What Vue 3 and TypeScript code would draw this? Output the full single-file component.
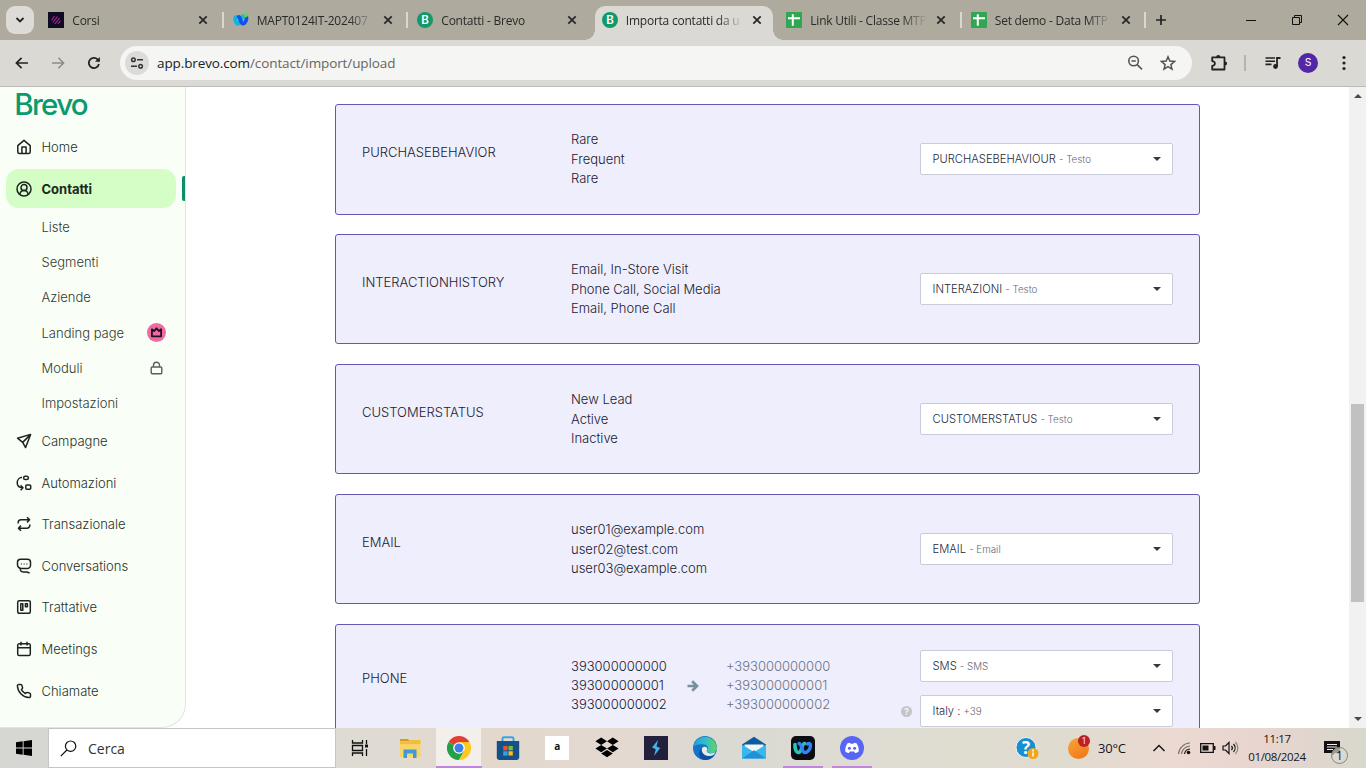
<script setup lang="ts">
type Tab = { title: string; icon: 'corsi' | 'webex' | 'brevo' | 'sheet'; active?: boolean; sep?: boolean }
type NavItem = { label: string; icon: string }
type SubItem = { label: string; badge?: 'crown' | 'lock' }
type FieldCard = { name: string; values: string[]; target: string; kind: string }

const tabs: Tab[] = [
  { title: 'Corsi', icon: 'corsi', sep: true },
  { title: 'MAPT0124IT-202407', icon: 'webex', sep: true },
  { title: 'Contatti - Brevo', icon: 'brevo' },
  { title: 'Importa contatti da u', icon: 'brevo', active: true },
  { title: 'Link Utili - Classe MTP', icon: 'sheet', sep: true },
  { title: 'Set demo - Data MTP', icon: 'sheet', sep: true },
]

const subItems: SubItem[] = [
  { label: 'Liste' },
  { label: 'Segmenti' },
  { label: 'Aziende' },
  { label: 'Landing page', badge: 'crown' },
  { label: 'Moduli', badge: 'lock' },
  { label: 'Impostazioni' },
]

const navItems: NavItem[] = [
  { label: 'Campagne', icon: 'M1.5 5.2 14.6 1.4 9.6 14.6 6.7 9.4ZM6.7 9.4 14.4 1.6' },
  { label: 'Automazioni', icon: 'M6 2.300A5.400 5.400 0 0 0 1.200 7.600c0 3 2 5.200 5.400 5.200M4.600 10.400 7 12.800 4.600 15.200M9.300 1.200h1.400a1.700 1.700 0 0 1 0 3.400H9.300a1.700 1.700 0 0 1 0-3.400ZM10.800 10h2.900a1 1 0 0 1 1 1v2.300a1 1 0 0 1-1 1h-2.900a1 1 0 0 1-1-1V11a1 1 0 0 1 1-1Z' },
  { label: 'Transazionale', icon: 'M11 1.2 13.6 3.8 11 6.4M13.6 3.8H5A2.8 2.8 0 0 0 2.2 6.6V7.4M5 14.8 2.4 12.2 5 9.6M2.4 12.2H11A2.8 2.8 0 0 0 13.8 9.4V8.6' },
  { label: 'Conversations', icon: 'M14.500 4.200V7.600a2.800 2.800 0 0 1-2.800 2.800H5.200A3.600 3.600 0 0 1 1.500 6.800V4.200A2.900 2.900 0 0 1 4.400 1.300h7.200a2.900 2.900 0 0 1 2.900 2.900ZM4.200 10.400c-.2 2.400 1 3.600 3 3.600h3.500l2.900 1M4.900 5.900h.8M7.700 5.900h.8M10.500 5.900h.8' },
  { label: 'Trattative', icon: 'M3.200 1.700h9.600a1.500 1.500 0 0 1 1.500 1.500v9.600a1.500 1.500 0 0 1-1.500 1.500H3.200a1.500 1.500 0 0 1-1.500-1.500V3.200a1.500 1.500 0 0 1 1.500-1.500ZM4.800 4.700h2v6.500h-2ZM9.400 4.700h2V7.700h-2Z' },
  { label: 'Meetings', icon: 'M3.300 2.800h9.400a1.600 1.600 0 0 1 1.600 1.600v8.500a1.600 1.600 0 0 1-1.600 1.600H3.300a1.600 1.600 0 0 1-1.600-1.600V4.400a1.600 1.600 0 0 1 1.600-1.600ZM1.700 6.700h12.600M5 .8v3.600M11 .8v3.600' },
  { label: 'Chiamate', icon: 'M14.500 11.300v1.900a1.400 1.400 0 0 1-1.500 1.400C6.700 14.100 1.900 9.200 1.400 3A1.400 1.400 0 0 1 2.800 1.400h1.900c.7 0 1.200.4 1.300 1.100.1.700.3 1.300.5 1.900.2.500.1 1-.3 1.400l-.8.8a10.500 10.500 0 0 0 4 4l.8-.8c.4-.4.9-.5 1.400-.3.600.2 1.200.4 1.800.5.700.1 1.100.600 1.100 1.300Z' },
]

const cards: FieldCard[] = [
  { name: 'PURCHASEBEHAVIOR', values: ['Rare', 'Frequent', 'Rare'], target: 'PURCHASEBEHAVIOUR', kind: 'Testo' },
  { name: 'INTERACTIONHISTORY', values: ['Email, In-Store Visit', 'Phone Call, Social Media', 'Email, Phone Call'], target: 'INTERAZIONI', kind: 'Testo' },
  { name: 'CUSTOMERSTATUS', values: ['New Lead', 'Active', 'Inactive'], target: 'CUSTOMERSTATUS', kind: 'Testo' },
  { name: 'EMAIL', values: ['user01@example.com', 'user02@test.com', 'user03@example.com'], target: 'EMAIL', kind: 'Email' },
]

const phones = ['393000000000', '393000000001', '393000000002']
</script>

<template>
  <div class="screen">
    <header class="tabstrip">
      <button class="tab-search" aria-label="Cerca schede">
        <svg width="10" height="8" viewBox="0 0 10 8"><path d="M1.500 2 5 5.500 8.500 2" fill="none" stroke="#222" stroke-width="1.800" /></svg>
      </button>
      <div class="tabs">
        <div v-for="tab in tabs" :key="tab.title" class="tab" :class="{ active: tab.active, sep: tab.sep }">
          <svg class="fav" width="16" height="16" viewBox="0 0 16 16">
            <template v-if="tab.icon === 'corsi'">
              <rect width="16" height="16" fill="#0e0b22" />
              <path d="M3.500 8.500 6.500 4M5 10.500 9.500 4.500M7 11.800 11.500 6M10 12 12.500 8.500" stroke="#a8269a" stroke-width="1.200" />
            </template>
            <template v-else-if="tab.icon === 'webex'">
              <path d="M2.600 5.200c-.8 3 .6 6.500 2.500 6.500 2.300 0 2.600-7 5.400-7.400" fill="none" stroke="#12b4dc" stroke-width="4" stroke-linecap="round" />
              <path d="M5.600 4.800c2.200.2 1.600 6.800 4.400 6.800 2.300 0 3.600-3.600 3.500-6" fill="none" stroke="#1450ef" stroke-width="3.800" stroke-linecap="round" />
              <circle cx="12.500" cy="3.500" r="2" fill="#55d65c" />
            </template>
            <template v-else-if="tab.icon === 'brevo'">
              <circle cx="8" cy="8" r="8" fill="#11996a" />
              <text x="8" y="12.200" text-anchor="middle" font-size="11.500" font-weight="600" fill="#fff" class="fav-letter">B</text>
            </template>
            <template v-else>
              <rect width="16" height="16" rx="1" fill="#2fa652" />
              <path d="M2 6.200h12M6.800 2.200v11.600" stroke="#fff" stroke-width="2" />
            </template>
          </svg>
          <span class="tab-title">{{ tab.title }}</span>
          <svg class="tab-close" width="10" height="10" viewBox="0 0 10 10"><path d="m1.300 1.300 7.400 7.400m0-7.400-7.400 7.400" stroke="#262626" stroke-width="1.700" /></svg>
        </div>
      </div>
      <svg class="new-tab" width="12" height="12" viewBox="0 0 12 12"><path d="M6 1v10M1 6h10" stroke="#222" stroke-width="1.700" /></svg>
      <div class="window-buttons">
        <svg width="12" height="12" viewBox="0 0 12 12"><path d="M1 6.500h10" stroke="#111" /></svg>
        <svg width="12" height="12" viewBox="0 0 12 12"><path d="M1.500 3.500h7v7h-7zM3.500 3.500v-2h7v7h-2" fill="none" stroke="#111" /></svg>
        <svg width="12" height="12" viewBox="0 0 12 12"><path d="m1 1 10 10M11 1 1 11" stroke="#111" stroke-width="1.100" /></svg>
      </div>
    </header>

    <div class="toolbar">
      <svg class="tb-icon" width="16" height="16" viewBox="0 0 16 16"><path d="M14 8H2.800M7.600 2.800 2.400 8l5.200 5.200" fill="none" stroke="#222" stroke-width="1.700" /></svg>
      <svg class="tb-icon" width="16" height="16" viewBox="0 0 16 16"><path d="M2 8h11.200M8.400 2.800 13.600 8l-5.200 5.200" fill="none" stroke="#8d8c88" stroke-width="1.500" /></svg>
      <svg class="tb-icon" width="16" height="16" viewBox="0 0 16 16"><path d="M12.900 9A5.100 5.100 0 1 1 11.600 4.400L13.200 6" fill="none" stroke="#222" stroke-width="1.800" /><path d="M13.900 1.900v4.900H9z" fill="#222" /></svg>
      <div class="omnibox">
        <span class="site-info">
          <svg width="14" height="12" viewBox="0 0 14 12" fill="none" stroke="#333" stroke-width="1.500"><circle cx="3.400" cy="2.800" r="1.800" /><path d="M7 2.800h6M1 9.200h6" /><circle cx="10.600" cy="9.200" r="1.800" /></svg>
        </span>
        <span class="url"><span class="host">app.brevo.com</span>/contact/import/upload</span>
        <svg class="zoom-ic" width="16" height="16" viewBox="0 0 16 16" fill="none" stroke="#55554f" stroke-width="1.600"><circle cx="6.600" cy="6" r="4.800" /><path d="m10.200 9.600 4.800 4.800M4.400 6h4.400" /></svg>
        <svg class="star-ic" width="16" height="16" viewBox="0 0 16 16" fill="none" stroke="#55554f" stroke-width="1.500"><path d="m8 1.800 1.800 4.300 4.700.4L10.900 9.600l1.100 4.500L8 11.700l-4 2.400 1.100-4.500L1.500 6.500l4.700-.4Z" /></svg>
      </div>
      <svg class="puzzle" width="18" height="18" viewBox="0 0 18 18"><path d="M2.200 3.300h12.300v12.200H2.200v-3.700c1.700 0 2.700-1 2.700-2.300S3.900 7.100 2.200 7.100Z" fill="none" stroke="#222" stroke-width="1.800" stroke-linejoin="round" /><path d="M6.200 3a2.100 2.100 0 0 1 4.200 0ZM15 7.400a2.100 2.100 0 0 1 0 4.200Z" fill="#222" /></svg>
      <span class="tb-divider"></span>
      <svg class="media" width="16" height="14" viewBox="0 0 16 14"><path d="M.5 2h9.500M.5 5.200h9.500M.5 8.400h6" stroke="#222" stroke-width="1.600" /><path d="M12 10.500V2h3.500" fill="none" stroke="#222" stroke-width="1.800" /><circle cx="10.500" cy="10.500" r="2.400" fill="#222" /></svg>
      <span class="avatar">S</span>
      <svg class="kebab" width="4" height="16" viewBox="0 0 4 16" fill="#222"><circle cx="2" cy="2.500" r="1.600" /><circle cx="2" cy="8" r="1.600" /><circle cx="2" cy="13.500" r="1.600" /></svg>
    </div>

    <div class="page">
      <aside class="sidebar">
        <svg class="logo" width="84" height="24" viewBox="0 0 84 24">
          <text x="-.8" y="22" textLength="74.500" lengthAdjust="spacing">Brevo</text>
        </svg>
        <nav>
          <a class="nav-item">
            <svg width="16" height="16" viewBox="0 0 16 16"><path d="M1.800 6.600 8 1.400l6.200 5.200v6.500a1.400 1.400 0 0 1-1.400 1.400H3.200a1.400 1.400 0 0 1-1.400-1.400ZM5.900 14.500V8h4.200v6.500" /></svg>
            <span>Home</span>
          </a>
          <a class="nav-item current">
            <svg width="16" height="16" viewBox="0 0 16 16"><circle cx="8" cy="8" r="7" /><circle cx="8" cy="6.600" r="3" /><path d="M3.800 13.300c.5-2.400 2-3.700 4.200-3.700s3.700 1.300 4.200 3.700" /></svg>
            <span>Contatti</span>
          </a>
          <div class="subnav">
            <a v-for="item in subItems" :key="item.label" class="sub-item">
              <span>{{ item.label }}</span>
              <svg v-if="item.badge === 'crown'" width="19" height="19" viewBox="0 0 19 19"><circle cx="9.500" cy="9.500" r="9.500" fill="#ee6aa0" /><path d="M4.900 6.300 7.200 8l2.300-2.700L11.800 8l2.300-1.700v7H4.900Z" fill="none" stroke="#1c1420" stroke-width="1.800" stroke-linejoin="round" /></svg>
              <svg v-else-if="item.badge === 'lock'" width="19" height="14" viewBox="0 0 19 14"><path d="M5.200 6h8.600a1 1 0 0 1 1 1v4.600a1.200 1.200 0 0 1-1.200 1.200H5.400a1.200 1.200 0 0 1-1.200-1.200V7a1 1 0 0 1 1-1ZM6.500 6V4.200a3 3 0 0 1 6 0V6" fill="none" stroke="#55605a" stroke-width="1.400" /></svg>
            </a>
          </div>
          <a v-for="item in navItems" :key="item.label" class="nav-item">
            <svg width="16" height="16" viewBox="0 0 16 16"><path :d="item.icon" /></svg>
            <span>{{ item.label }}</span>
          </a>
        </nav>
      </aside>

      <main class="content">
        <section v-for="card in cards" :key="card.name" class="card">
          <h3>{{ card.name }}</h3>
          <ul>
            <li v-for="(value, i) in card.values" :key="i">{{ value }}</li>
          </ul>
          <div class="select">
            <span>{{ card.target }} <small>- {{ card.kind }}</small></span>
            <i class="caret"></i>
          </div>
        </section>
        <section class="card phone">
          <h3>PHONE</h3>
          <div class="phone-values">
            <ul>
              <li v-for="p in phones" :key="p">{{ p }}</li>
            </ul>
            <svg width="12" height="12" viewBox="0 0 12 12"><path d="M.5 6h8.500M5.200 1.200 10 6l-4.800 4.800" fill="none" stroke="#78909c" stroke-width="2.700" /></svg>
            <ul class="muted">
              <li v-for="p in phones" :key="p">+{{ p }}</li>
            </ul>
          </div>
          <div class="phone-selects">
            <div class="select"><span>SMS <small>- SMS</small></span><i class="caret"></i></div>
            <div class="country">
              <span class="help">?</span>
              <div class="select"><span>Italy : <small>+39</small></span><i class="caret"></i></div>
            </div>
          </div>
        </section>
      </main>

      <div class="scrollbar">
        <i class="up"></i>
        <div class="track"><div class="thumb"></div></div>
        <i class="down"></i>
      </div>
    </div>

    <footer class="taskbar">
      <div class="start">
        <svg width="16" height="16" viewBox="0 0 16 16"><path d="M0 2.300 6.700 1.300v6.200H0ZM7.600 1.200 16 0v7.500H7.600ZM0 8.500h6.700v6.200L0 13.700ZM7.600 8.500H16V16l-8.400-1.200Z" fill="#000" /></svg>
      </div>
      <div class="search">
        <svg width="17" height="17" viewBox="0 0 17 17" fill="none" stroke="#111" stroke-width="1.200"><circle cx="10.600" cy="6.200" r="5.200" /><path d="M6.900 10 .8 16.200" /></svg>
        <span>Cerca</span>
      </div>
      <div class="apps">
        <div class="app">
          <svg width="24" height="24" viewBox="0 0 24 24" fill="none" stroke="#111" stroke-width="1.300"><path d="M3.500 4v3h10V4M3.500 20v-3h10v3M3.500 9.500h10v5h-10ZM17.500 4v4M17.500 13v7" /><path d="M17.500 8.500v3" stroke-width="3" /></svg>
        </div>
        <div class="app">
          <svg width="24" height="24" viewBox="0 0 24 24"><path d="M2 3h8l2 2.500H2Z" fill="#d69a1d" /><path d="M2 5.500h20.500V21H2Z" fill="#fbd467" /><path d="M2 5.500h8l2-1.500h10.500v4H2Z" fill="#f2bd3f" /><path d="M5.500 22v-8.500h13V22H15v-4.500H9V22Z" fill="#3e9ad8" /></svg>
        </div>
        <div class="app open focused">
          <svg width="24" height="24" viewBox="0 0 24 24"><path d="M12 12 1.600 6A12 12 0 0 1 22.400 6Z" fill="#e43e31" /><path d="M1.600 6A12 12 0 0 0 12 24l5.200-9-5.200-3Z" fill="#24a04a" /><path d="M22.400 6A12 12 0 0 1 12 24l5.200-9L12 6Z" fill="#fcc922" /><circle cx="12" cy="12" r="5.800" fill="#fff" /><circle cx="12" cy="12" r="4.500" fill="#3e7fe8" /></svg>
        </div>
        <div class="app">
          <svg width="24" height="24" viewBox="0 0 24 24"><path d="M6.500 6V2.800A1.500 1.500 0 0 1 8 1.300h8a1.500 1.500 0 0 1 1.500 1.500V6" fill="none" stroke="#3aa5e5" stroke-width="2" /><path d="M.8 5h22.400v16.600a2.400 2.400 0 0 1-2.400 2.400H3.200a2.400 2.400 0 0 1-2.400-2.400Z" fill="#165089" /><path d="M7.200 10h4.300v4.300H7.200Z" fill="#f05326" /><path d="M12.500 10h4.300v4.300h-4.300Z" fill="#82bc31" /><path d="M7.200 15.300h4.300v4.300H7.200Z" fill="#28a8e8" /><path d="M12.500 15.300h4.300v4.300h-4.300Z" fill="#fcba22" /></svg>
        </div>
        <div class="app"><span class="amazon">a</span></div>
        <div class="app">
          <svg width="24" height="24" viewBox="0 0 24 24" fill="#000"><path d="m6.200 1.500 5.800 3.700-5.800 3.700L.4 5.200ZM17.800 1.500l5.800 3.700-5.800 3.700L12 5.200ZM6.200 8.900 12 12.600l-5.800 3.700-5.800-3.700ZM17.800 8.900l5.800 3.700-5.800 3.700-5.800-3.700ZM12 13.900l5.800 3.700-5.800 3.700-5.800-3.700Z" /></svg>
        </div>
        <div class="app">
          <svg width="24" height="24" viewBox="0 0 24 24"><rect width="24" height="24" fill="#22203c" /><path d="M14 4 8 11.500l3.800 1.700L10 20l6.200-8-3.700-1.500Z" fill="#43b4ef" /></svg>
        </div>
        <div class="app">
          <svg width="24" height="24" viewBox="0 0 24 24">
            <defs>
              <linearGradient id="edgeTop" x1="0" x2="1"><stop offset="0" stop-color="#279cdf" /><stop offset=".55" stop-color="#34c2c0" /><stop offset="1" stop-color="#67d35c" /></linearGradient>
            </defs>
            <circle cx="12" cy="12" r="12" fill="#1474c9" />
            <path d="M.2 11A12 12 0 0 1 24 11.500c0 3.700-3 5.500-6 5.500-2.600 0-4.500-1.100-3.700-2.500 2.200-3-.6-6.600-5.200-6.200C4.500 8.300 1 9.500.2 11Z" fill="url(#edgeTop)" />
            <path d="M8.400 12.500c-.8 5 4.200 9 12.600 7.500A12 12 0 0 1 12 24C6.500 23.500 3.800 17 8.400 12.500Z" fill="#10509e" />
            <path d="M9 12.500c1-2.500 5-2.500 5.400.5 0 1-1 1.400-.6 2.600 1.200 2.500 6 2.300 8.800.2-1 3-3.500 4.200-6.800 4.200C11 20 8.200 16 9 12.500Z" fill="#e8ebe8" />
          </svg>
        </div>
        <div class="app">
          <svg width="24" height="24" viewBox="0 0 24 24"><path d="M0 8.500 12 .8l12 7.700V12H0Z" fill="#0c5a9f" /><path d="M2.500 8.500h19v7h-19Z" fill="#f2f5f7" /><path d="M0 8.500 12 16 24 8.500v14H0Z" fill="#38b8ed" /><path d="m0 22.500 12-8.200 12 8.200Z" fill="#2090d8" /></svg>
        </div>
        <div class="app open">
          <svg width="24" height="24" viewBox="0 0 24 24" fill="none" stroke-linecap="round"><rect width="24" height="24" rx="5" fill="#0b0d12" /><path d="M4 8.500c-.5 4.500 1.500 8 3.700 8 3.200 0 2.900-9 6-9" stroke="#23c6b7" stroke-width="3.600" /><path d="M8 7.500c3 0 2.600 9 5.700 9 3 0 5.800-3.500 5.800-7 0-2-1.500-2.500-3-1.500" stroke="#3482f5" stroke-width="3.400" /></svg>
        </div>
        <div class="app open">
          <svg width="24" height="24" viewBox="0 0 24 24"><circle cx="12" cy="12" r="12" fill="#5865f2" /><path d="M7.500 7.300 10 6.700l.6 1h2.800l.6-1 2.500.6c1.700 2.500 2.500 5 2.200 8.200-1.300 1-2.300 1.400-3.600 1.600l-.9-1.500H9.800l-.9 1.500c-1.300-.2-2.300-.600-3.600-1.600-.3-3.200.5-5.700 2.200-8.200Z" fill="#fff" /><circle cx="9.400" cy="12.300" r="1.500" fill="#5865f2" /><circle cx="14.600" cy="12.300" r="1.500" fill="#5865f2" /></svg>
        </div>
      </div>
      <div class="tray">
        <svg class="t-help" width="24" height="24" viewBox="0 0 24 24"><circle cx="11" cy="11.500" r="10" fill="#188fce" stroke="#f2f2f2" /><text x="11" y="17.500" text-anchor="middle" font-size="17" font-weight="700" fill="#fff">?</text><circle cx="18" cy="17.500" r="5.500" fill="#f4a51c" /><path d="M18 16.500v4" stroke="#fff" stroke-width="1.500" /><circle cx="18" cy="14.400" r="1" fill="#fff" /></svg>
        <span class="weather"><span class="alert">1</span></span>
        <span class="temp">30°C</span>
        <svg class="t-chev" width="14" height="8" viewBox="0 0 14 8"><path d="m1.500 7 5.500-5.500L12.500 7" fill="none" stroke="#111" stroke-width="1.400" /></svg>
        <svg class="t-wifi" width="15" height="14" viewBox="0 0 15 14" fill="none" stroke="#77716d" stroke-width="1.200"><path d="M1.500 13A12 12 0 0 1 13 2M4.500 13A9 9 0 0 1 13 5" /><path d="M7.500 13A6 6 0 0 1 13 8" stroke="#222" /><circle cx="11.500" cy="11.500" r="1.800" fill="#111" stroke="none" /></svg>
        <svg class="t-batt" width="16" height="10" viewBox="0 0 16 10"><path d="M.7.7h12.600v8.600H.7Z" fill="none" stroke="#111" stroke-width="1.300" /><path d="M2.500 2.500h6v5h-6ZM14 3h1.500v4H14Z" fill="#111" /></svg>
        <svg class="t-vol" width="17" height="14" viewBox="0 0 17 14" fill="none" stroke="#111" stroke-width="1.200"><path d="M1 5h2.500L7 1.500v11L3.500 9H1ZM9.500 4.800a3.500 3.500 0 0 1 0 4.400M11.500 3a6 6 0 0 1 0 8" /><path d="M13.500 1a9 9 0 0 1 0 12" stroke="#8d8785" /></svg>
        <div class="clock"><span>11:17</span><span>01/08/2024</span></div>
        <div class="notify">
          <svg width="16" height="15" viewBox="0 0 16 15"><path d="M0 0h16v12h-5l-3 3v-3H0Z" fill="#111" /><path d="M3 3.500h10M3 6h10M3 8.500h6" stroke="#eee" stroke-width="1.100" /></svg>
          <span>1</span>
        </div>
      </div>
    </footer>
  </div>
</template>

<style>
body {
  overflow: hidden;
}
</style>

<style scoped>
.screen {
  width: 1366px;
  height: 768px;
  display: flex;
  flex-direction: column;
  overflow: hidden;
  background: #fff;
  font-family: Inter, "Liberation Sans", sans-serif;
}
.screen * {
  box-sizing: border-box;
}
svg {
  flex: none;
  display: block;
}

/* Tab strip */
.tabstrip {
  height: 40px;
  flex: none;
  display: flex;
  align-items: center;
  background: #aeaa9e;
  font-family: "Open Sans", "Noto Sans", sans-serif;
}
.tab-search {
  width: 28px;
  height: 28px;
  margin-left: 6px;
  border: 0;
  padding: 0;
  border-radius: 9px;
  background: #dcdbd6;
  display: grid;
  place-items: center;
}
.tabs {
  display: flex;
  margin-left: 4px;
  align-self: stretch;
  width: 1107px;
}
.tab {
  flex: 1 1 0;
  min-width: 0;
  position: relative;
  display: flex;
  align-items: center;
  padding: 0 14.200px 0 10.300px;
}
.tab.sep::after {
  content: "";
  position: absolute;
  right: -1px;
  top: 12px;
  width: 2px;
  height: 16px;
  background: #d9d7d0;
}
.tab > * {
  position: relative;
}
.tab.active::before {
  content: "";
  position: absolute;
  left: 3px;
  right: 3px;
  top: 6px;
  bottom: 0;
  border-radius: 10px 10px 0 0;
  background: #dad9d4;
}
.tab.active::after {
  content: "";
  position: absolute;
  left: -7px;
  right: -7px;
  bottom: 0;
  height: 10px;
  background:
    radial-gradient(circle at 0 0, transparent 9.500px, #dad9d4 10px) left / 10px 10px no-repeat,
    radial-gradient(circle at 100% 0, transparent 9.500px, #dad9d4 10px) right / 10px 10px no-repeat;
}
.fav-letter {
  font-family: Inter, sans-serif;
}
.tab-title {
  flex: 1;
  margin-left: 8px;
  margin-right: 8px;
  padding-top: 1px;
  white-space: nowrap;
  font-size: 12px;
  line-height: 18px;
  letter-spacing: -0.230px;
  color: #2a2a28;
  mask-image: linear-gradient(90deg, #000 92px, transparent 117px);
}
.new-tab {
  margin-left: 10px;
}
.window-buttons {
  margin-left: auto;
  display: flex;
  gap: 34px;
  padding-right: 17px;
}

/* Toolbar */
.toolbar {
  height: 47px;
  flex: none;
  display: flex;
  align-items: center;
  border-bottom: 1px solid #bdbcb8;
  background: #dad9d4;
}
.tb-icon {
  margin-left: 14px;
  margin-right: 6px;
}
.omnibox {
  width: 1072px;
  height: 34px;
  margin-left: 12px;
  padding: 0 16px 0 5px;
  border-radius: 17px;
  background: #f5f5f3;
  display: flex;
  align-items: center;
}
.site-info {
  width: 24px;
  height: 24px;
  border-radius: 50%;
  background: #dcdbd8;
  display: grid;
  place-items: center;
}
.url {
  margin-left: 8px;
  font-family: "Open Sans", "Noto Sans", sans-serif;
  font-size: 13.500px;
  letter-spacing: -0.110px;
  color: #666661;
}
.host {
  color: #20201f;
}
.zoom-ic {
  margin-left: auto;
}
.star-ic {
  margin-left: 17px;
}
.puzzle {
  margin-left: 18px;
}
.tb-divider {
  width: 2px;
  height: 16px;
  margin-left: 16px;
  background: #b5b3ae;
}
.media {
  margin-left: 19px;
}
.avatar {
  width: 20px;
  height: 20px;
  margin-left: 17px;
  border-radius: 50%;
  background: #5227a5;
  color: #fff;
  font-size: 10.500px;
  line-height: 20px;
  text-align: center;
}
.kebab {
  margin-left: 24px;
}

/* Page */
.page {
  height: 641px;
  flex: none;
  display: flex;
  overflow: hidden;
}
.sidebar {
  width: 186px;
  height: 641px;
  padding: 6px 9px 0 6px;
  background: #f9fff6;
  border-right: 1px solid #dfe6e2;
  border-bottom: 1px solid #dfe6e2;
  border-bottom-right-radius: 24px;
}
.logo {
  margin-left: 9px;
  margin-bottom: 10.850px;
}
.logo text {
  font-family: Inter, sans-serif;
  font-size: 29.500px;
  font-weight: 500;
  fill: #0b996e;
}
.nav-item {
  height: 39px;
  margin-bottom: 2.600px;
  padding-left: 10px;
  display: flex;
  align-items: center;
  gap: 9.500px;
  color: #26302b;
  font-size: 13px;
  font-weight: 300;
}
.nav-item svg {
  fill: none;
  stroke: #1b2420;
  stroke-width: 1.500;
  stroke-linejoin: round;
}
.nav-item.current {
  position: relative;
  margin-bottom: 0;
  border-radius: 13px;
  background: #d5fdc6;
  color: #1b2a20;
  font-weight: 700;
}
.nav-item.current::after {
  content: "";
  position: absolute;
  right: -9px;
  top: 7px;
  width: 3px;
  height: 25px;
  border-radius: 2px 0 0 2px;
  background: #0b8f68;
}
.subnav {
  padding: 1px 0 1px;
}
.sub-item {
  height: 35.200px;
  padding: 0 10px 0 35.500px;
  display: flex;
  align-items: center;
  justify-content: space-between;
  color: #303a34;
  font-size: 13px;
  font-weight: 300;
}
.content {
  width: 865px;
  margin-left: 149px;
  padding-top: 17px;
}
.card {
  height: 110px;
  margin-bottom: 20px;
  padding: 25px 26px 0;
  border: 1px solid #6556b3;
  border-radius: 3px;
  background: #eeeefc;
  display: grid;
  grid-template-columns: 209px 349px 253px;
  align-items: start;
  color: #1c2030;
  font-weight: 300;
}
.card:first-child {
  height: 111px;
  margin-bottom: 19px;
}
h3 {
  margin: 13px 0 0;
  font-size: 13px;
  line-height: 19.500px;
  font-weight: 300;
}
ul {
  margin: 0;
  padding: 0;
  list-style: none;
  font-size: 13px;
  line-height: 19.500px;
}
.select {
  height: 32px;
  margin-top: 13px;
  padding: 0 11px 0 11.500px;
  border: 1px solid #c9cbdc;
  border-radius: 2px;
  background: #fff;
  display: flex;
  align-items: center;
  justify-content: space-between;
  font-size: 11.200px;
  color: #262a3a;
}
.select small {
  font-size: 9.800px;
  color: #5f6a7a;
}
.caret {
  border: 4px solid transparent;
  border-top: 4px solid #333843;
  border-bottom: 0;
}
.phone {
  height: 140px;
}
.phone h3 {
  margin-top: 19px;
}
.phone-values {
  display: grid;
  grid-template-columns: 116px 39px auto;
  align-items: center;
  padding-top: 7px;
}
.phone-values ul {
  line-height: 19.200px;
}
.muted {
  color: #6a7488;
}
.phone-selects {
  display: grid;
  gap: 13px;
}
.phone-selects .select {
  margin-top: 0;
}
.country {
  position: relative;
}
.help {
  position: absolute;
  left: -19px;
  top: 11px;
  width: 11px;
  height: 11px;
  border-radius: 50%;
  background: #c3c3c8;
  color: #f4f4fb;
  font-size: 9px;
  font-weight: 700;
  line-height: 11px;
  text-align: center;
}
.scrollbar {
  width: 17px;
  margin-left: auto;
  background: #f1f1f1;
  display: flex;
  flex-direction: column;
  align-items: center;
}
.up {
  margin-top: 7px;
  border: 4px solid transparent;
  border-top: 0;
  border-bottom: 4px solid #4a4a4a;
}
.down {
  margin-bottom: 7px;
  border: 4px solid transparent;
  border-bottom: 0;
  border-top: 4px solid #4a4a4a;
}
.track {
  flex: 1;
  padding-top: 306px;
}
.thumb {
  width: 13px;
  height: 198px;
  background: #c1c1c1;
}

/* Taskbar */
.taskbar {
  height: 40px;
  flex: none;
  display: flex;
  background: linear-gradient(90deg, #dedbd3 0, #dfdbd3 28%, #e4d8cd 36%, #e3d9d1 46%, #dad9d2 53%, #dfddd2 65%, #dfdbcf 78%, #ecd9d2 86%, #e8d5cf 92%, #d8d8cd 100%);
  font-family: "Open Sans", "Noto Sans", sans-serif;
  color: #16161a;
}
.start {
  width: 48px;
  display: grid;
  place-items: center;
  background: #d6d6d3;
}
.search {
  width: 288px;
  padding-left: 11px;
  border: 1px solid #c5c5c5;
  background: #fff;
  display: flex;
  align-items: center;
  gap: 11px;
  font-size: 14px;
  color: #333;
}
.apps {
  display: flex;
}
.app {
  width: 49.200px;
  position: relative;
  display: grid;
  place-items: center;
}
.app.open::after {
  content: "";
  position: absolute;
  left: 4px;
  right: 5px;
  bottom: 0;
  height: 2px;
  background: #c184df;
}
.app.focused {
  background: linear-gradient(#f3efea, #f3efea) 2px 0 / 45px 100% no-repeat;
}
.app.focused::after {
  left: 2px;
  right: 2px;
}
.amazon {
  width: 24px;
  height: 24px;
  background: #fff;
  color: #111;
  font-size: 10px;
  font-weight: 700;
  line-height: 21px;
  text-align: center;
}
.tray {
  margin-left: auto;
  width: 351px;
  display: flex;
  align-items: center;
}
.weather {
  position: relative;
  width: 21px;
  height: 21px;
  margin-left: 29px;
  border-radius: 50%;
  background: linear-gradient(150deg, #f9a634, #ee7418);
}
.alert {
  position: absolute;
  left: 10px;
  top: -3px;
  width: 12px;
  height: 12px;
  border-radius: 50%;
  background: #bf1e28;
  color: #fff;
  font-size: 9px;
  line-height: 12px;
  text-align: center;
}
.temp {
  width: 30px;
  margin-left: 9px;
  font-size: 13px;
  letter-spacing: -0.200px;
  white-space: nowrap;
}
.t-chev {
  margin-left: 24px;
}
.t-wifi {
  margin-left: 11px;
}
.t-batt {
  margin-left: 8px;
}
.t-vol {
  margin-left: 6px;
}
.clock {
  width: 60px;
  margin-left: 8px;
  display: flex;
  flex-direction: column;
  align-items: center;
  font-size: 11.500px;
  line-height: 18px;
  letter-spacing: -0.350px;
  white-space: nowrap;
}
.notify {
  position: relative;
  margin-left: 17px;
}
.notify span {
  position: absolute;
  left: 7px;
  top: 6px;
  width: 17px;
  height: 17px;
  border: 1px solid #87837f;
  border-radius: 50%;
  background: #ddd8d0b0;
  font-size: 12px;
  line-height: 15px;
  text-align: center;
}
</style>
